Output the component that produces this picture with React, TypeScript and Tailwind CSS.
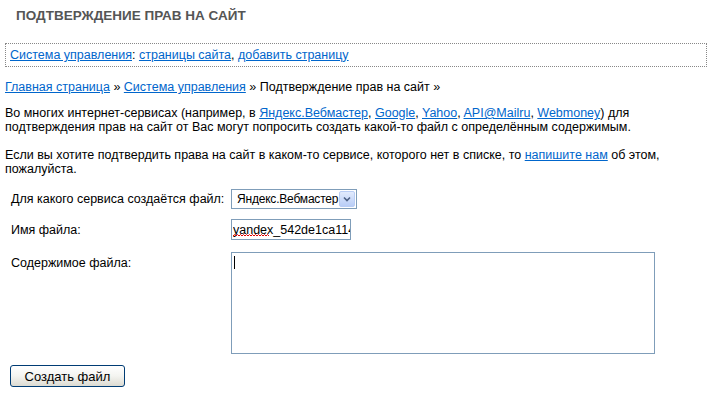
import { FC, ReactNode } from 'react';

const A: FC<{ children: ReactNode }> = ({ children }) => (
    <a href="#" className="text-[#0066cc] underline">
        {children}
    </a>
);

const SelectBox: FC = () => (
    <div className="flex h-[20px] w-[126px] items-center border border-[#7f9db9] bg-white pl-[5px] pr-[1px]">
        <span className="flex-1 overflow-hidden whitespace-nowrap text-[12px] leading-none tracking-[-0.2px] text-black">
            Яндекс.Вебмастер
        </span>
        <span className="flex h-[16px] w-[16px] shrink-0 items-center justify-center rounded-[2px] border border-[#b9cdf5] bg-gradient-to-b from-[#e2ebfd] to-[#b9cdf6]">
            <svg width="8" height="6" viewBox="0 0 8 6">
                <path
                    d="M1 1.5 L4 4.5 L7 1.5"
                    fill="none"
                    stroke="#4d6185"
                    strokeWidth="1.6"
                />
            </svg>
        </span>
    </div>
);

// red spell-check squiggle drawn over the start of the file name
const Squiggle: FC = () => (
    <svg
        className="pointer-events-none absolute left-[2px] top-[15px]"
        width="36"
        height="3"
        viewBox="0 0 36 3"
    >
        <path
            d="M0 2 L1.5 0.5 L3 2 L4.5 0.5 L6 2 L7.5 0.5 L9 2 L10.5 0.5 L12 2 L13.5 0.5 L15 2 L16.5 0.5 L18 2 L19.5 0.5 L21 2 L22.5 0.5 L24 2 L25.5 0.5 L27 2 L28.5 0.5 L30 2 L31.5 0.5 L33 2 L34.5 0.5 L36 2"
            fill="none"
            stroke="#e00000"
            strokeWidth="1"
        />
    </svg>
);

export default function App() {
    return (
        <div
            className="min-h-[394px] bg-white px-[5px] pt-[10px] text-[12.5px] text-black"
            style={{ fontFamily: '"Liberation Sans", Arial, sans-serif' }}
        >
            <h1 className="pl-[11px] text-[13.5px] font-bold leading-[12px] text-[#555555]">
                ПОДТВЕРЖДЕНИЕ ПРАВ НА САЙТ
            </h1>

            <div className="mt-[21px] h-[24px] border border-dotted border-[#888888] pl-[4px] leading-[22px]">
                <A>Система управления</A>: <A>страницы сайта</A>,{' '}
                <A>добавить страницу</A>
            </div>

            <p className="mt-[13px] leading-[14px]">
                <A>Главная страница</A> » <A>Система управления</A> »
                Подтверждение прав на сайт »
            </p>

            <p className="mt-[12px] leading-[14px]">
                Во многих интернет-сервисах (например, в{' '}
                <A>Яндекс.Вебмастер</A>, <A>Google</A>, <A>Yahoo</A>,{' '}
                <A>API@Mailru</A>, <A>Webmoney</A>) для
                <br />
                подтверждения прав на сайт от Вас могут попросить создать
                какой-то файл с определённым содержимым.
            </p>

            <p className="mt-[14px] leading-[14px]">
                Если вы хотите подтвердить права на сайт в каком-то сервисе,
                которого нет в списке, то <A>напишите нам</A> об этом,
                <br />
                пожалуйста.
            </p>

            <div className="mt-[13px] grid grid-cols-[226px_1fr]">
                <label className="pl-[6px] pt-[3px] leading-[14px]">
                    Для какого сервиса создаётся файл:
                </label>
                <SelectBox />

                <label className="mt-[10px] pl-[6px] pt-[4px] leading-[14px]">
                    Имя файла:
                </label>
                <div className="relative mt-[10px] h-[21px] w-[120px]">
                    <input
                        readOnly
                        value="yandex_542de1ca114e5f7a.html"
                        className="h-full w-full border border-[#7f9db9] bg-white pl-[1px] text-[12.5px] text-black outline-none"
                    />
                    <Squiggle />
                </div>

                <label className="mt-[12px] pl-[6px] pt-[4px] leading-[14px]">
                    Содержимое файла:
                </label>
                <div className="mt-[12px] h-[102px] w-[424px] border border-[#7f9db9] bg-white pl-[2px] pt-[3px]">
                    <div className="h-[13px] w-px bg-black" />
                </div>
            </div>

            <button className="ml-[5px] mt-[11px] h-[22px] w-[115px] rounded-[3px] border border-[#003c74] bg-gradient-to-b from-white via-[#f4f4f0] to-[#dcdbd2] text-[13px] leading-none text-black">
                Создать файл
            </button>
        </div>
    );
}
